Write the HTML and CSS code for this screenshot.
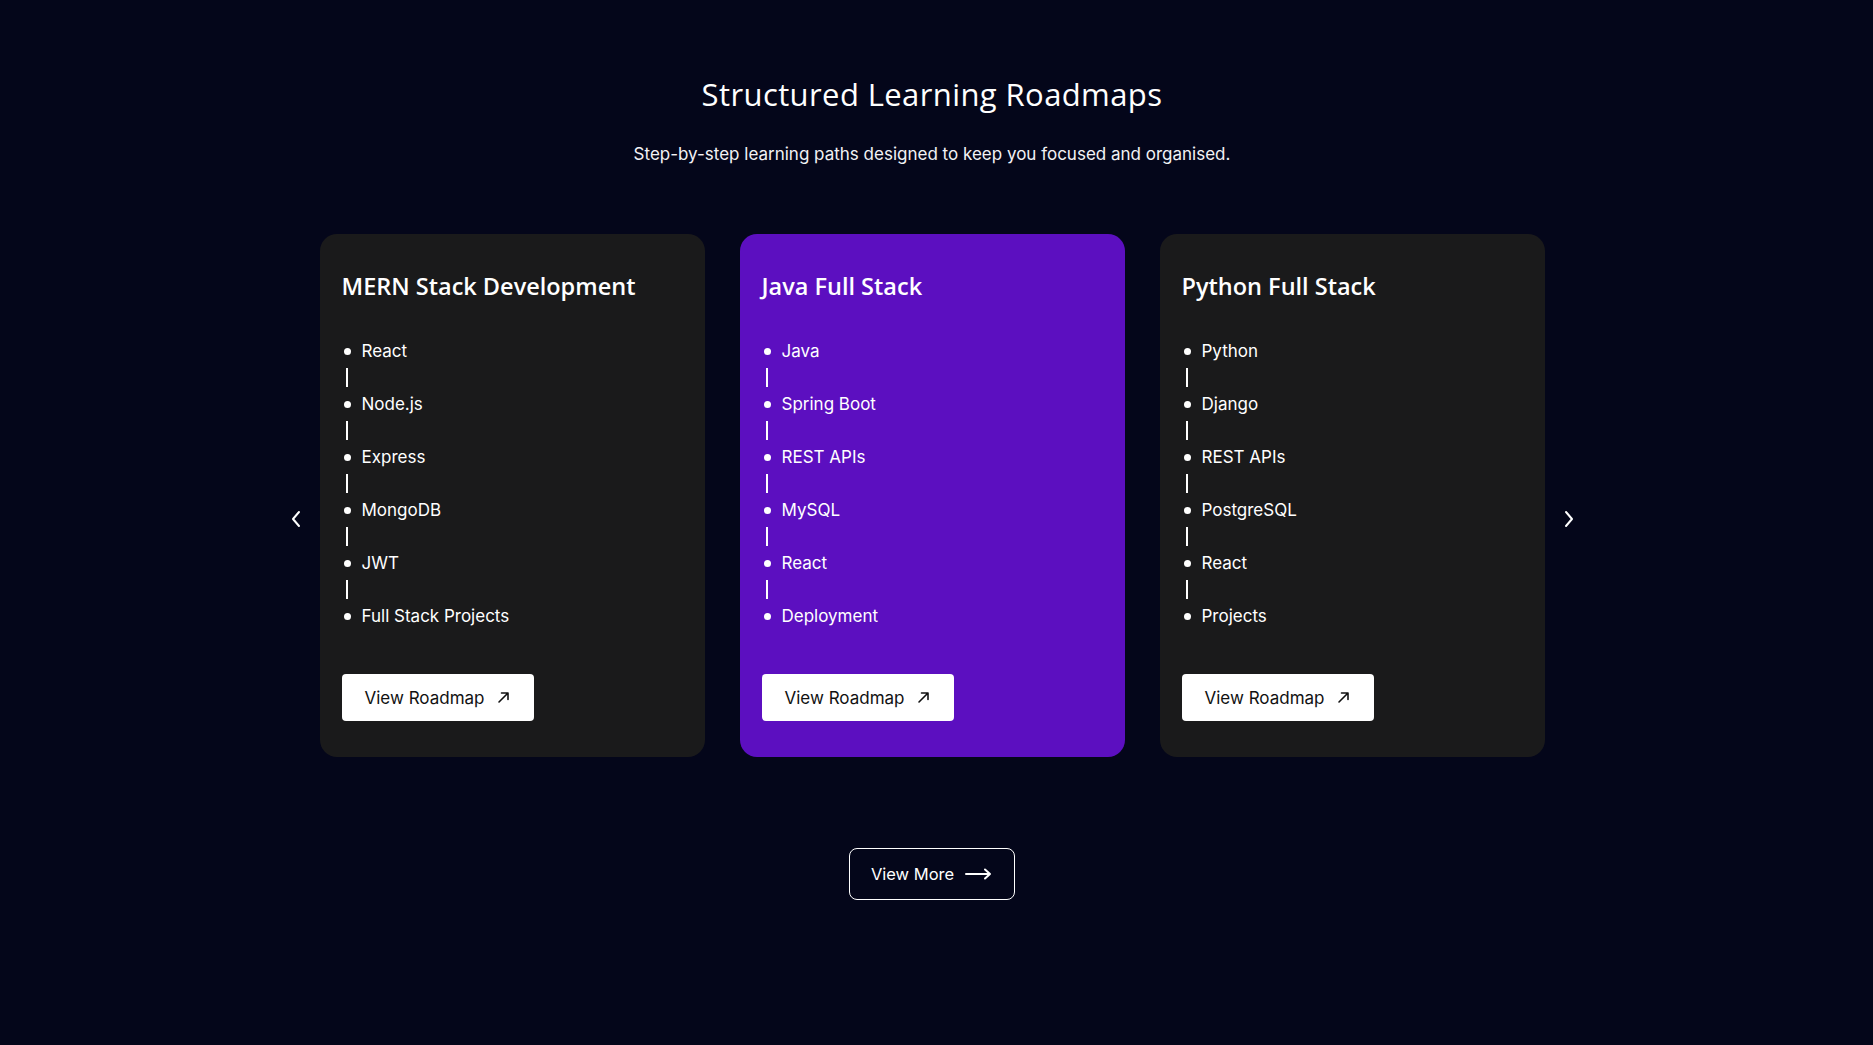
FILE: index.html
```html
<!DOCTYPE html>
<html lang="en">
<head>
    <meta charset="UTF-8">
    <meta name="viewport" content="width=device-width, initial-scale=1.0">
    <title>Structured Learning Roadmaps</title>
    <link rel="stylesheet" href="styles.css">
</head>
<body>
    <section class="roadmaps">
        <h2 class="section-title">Structured Learning Roadmaps</h2>
        <p class="section-sub">Step-by-step learning paths designed to keep you focused and organised.</p>

        <div class="carousel">
            <button class="nav-btn" aria-label="Previous">
                <svg width="12" height="18" viewBox="0 0 12 18" fill="none" stroke="#fff" stroke-width="2" stroke-linecap="round" stroke-linejoin="round"><path d="M9 2 L3 9 L9 16"/></svg>
            </button>

            <div class="cards">
                <div class="card">
                    <h3 class="card-title">MERN Stack Development</h3>
                    <ul class="steps">
                        <li>React</li>
                        <li class="sep"></li>
                        <li>Node.js</li>
                        <li class="sep"></li>
                        <li>Express</li>
                        <li class="sep"></li>
                        <li>MongoDB</li>
                        <li class="sep"></li>
                        <li>JWT</li>
                        <li class="sep"></li>
                        <li>Full Stack Projects</li>
                    </ul>
                    <a href="#" class="btn-roadmap">View Roadmap
                        <svg width="13" height="13" viewBox="0 0 13 13" fill="none" stroke="#111" stroke-width="1.6" stroke-linecap="round" stroke-linejoin="round"><path d="M2 11 L11 2 M4.5 2 H11 V8.5"/></svg>
                    </a>
                </div>

                <div class="card featured">
                    <h3 class="card-title">Java Full Stack</h3>
                    <ul class="steps">
                        <li>Java</li>
                        <li class="sep"></li>
                        <li>Spring Boot</li>
                        <li class="sep"></li>
                        <li>REST APIs</li>
                        <li class="sep"></li>
                        <li>MySQL</li>
                        <li class="sep"></li>
                        <li>React</li>
                        <li class="sep"></li>
                        <li>Deployment</li>
                    </ul>
                    <a href="#" class="btn-roadmap">View Roadmap
                        <svg width="13" height="13" viewBox="0 0 13 13" fill="none" stroke="#111" stroke-width="1.6" stroke-linecap="round" stroke-linejoin="round"><path d="M2 11 L11 2 M4.5 2 H11 V8.5"/></svg>
                    </a>
                </div>

                <div class="card">
                    <h3 class="card-title">Python Full Stack</h3>
                    <ul class="steps">
                        <li>Python</li>
                        <li class="sep"></li>
                        <li>Django</li>
                        <li class="sep"></li>
                        <li>REST APIs</li>
                        <li class="sep"></li>
                        <li>PostgreSQL</li>
                        <li class="sep"></li>
                        <li>React</li>
                        <li class="sep"></li>
                        <li>Projects</li>
                    </ul>
                    <a href="#" class="btn-roadmap">View Roadmap
                        <svg width="13" height="13" viewBox="0 0 13 13" fill="none" stroke="#111" stroke-width="1.6" stroke-linecap="round" stroke-linejoin="round"><path d="M2 11 L11 2 M4.5 2 H11 V8.5"/></svg>
                    </a>
                </div>
            </div>

            <button class="nav-btn" aria-label="Next">
                <svg width="12" height="18" viewBox="0 0 12 18" fill="none" stroke="#fff" stroke-width="2" stroke-linecap="round" stroke-linejoin="round"><path d="M3 2 L9 9 L3 16"/></svg>
            </button>
        </div>

        <div class="more">
            <a href="#" class="btn-more">View More
                <svg width="27" height="12" viewBox="0 0 27 12" fill="none" stroke="#fff" stroke-width="2" stroke-linecap="round" stroke-linejoin="round"><path d="M1 6 H25 M20 1.5 L25 6 L20 10.5"/></svg>
            </a>
        </div>
    </section>
</body>
</html>
```

FILE: styles.css
```css
* {
    margin: 0;
    padding: 0;
    box-sizing: border-box;
}

body {
    background-color: #04061a;
    color: #fff;
    font-family: Inter, 'Noto Sans', sans-serif;
    min-height: 100vh;
}

.roadmaps {
    padding: 72px 9px 0 0;
    text-align: center;
}

.section-title {
    font-family: 'Open Sans', sans-serif;
    font-weight: 400;
    font-size: 31px;
    line-height: 44px;
    letter-spacing: 0.4px;
}

.section-sub {
    margin-top: 26px;
    font-size: 17px;
    line-height: 24px;
    color: #f2f2f5;
}

.carousel {
    margin-top: 68px;
    display: flex;
    justify-content: center;
    align-items: center;
    gap: 12px;
}

.nav-btn {
    background: none;
    border: none;
    width: 24px;
    height: 24px;
    display: flex;
    align-items: center;
    justify-content: center;
    margin-top: 46px;
    cursor: pointer;
}

.cards {
    display: flex;
    gap: 35px;
}

.card {
    width: 385px;
    height: 523px;
    background-color: #1a1a1b;
    border-radius: 17px;
    padding: 37px 22px 36px;
    text-align: left;
    display: flex;
    flex-direction: column;
}

.card.featured {
    background-color: #5c0fc0;
}

.card-title {
    font-family: 'Open Sans', sans-serif;
    font-weight: 600;
    font-size: 23.5px;
    line-height: 30px;
}

.steps {
    list-style: none;
    margin-top: 37px;
    font-size: 17px;
}

.steps li {
    position: relative;
    padding-left: 20px;
    line-height: 26px;
}

.steps li::before {
    content: "";
    position: absolute;
    left: 2px;
    top: 50%;
    width: 7px;
    height: 7px;
    margin-top: -3px;
    border-radius: 50%;
    background: #fff;
}

.steps li.sep {
    height: 27px;
    padding: 0;
}

.steps li.sep::before {
    left: 4px;
    top: 4px;
    width: 2px;
    height: 19px;
    margin: 0;
    border-radius: 0;
}

.btn-roadmap {
    margin-top: auto;
    align-self: flex-start;
    display: inline-flex;
    align-items: center;
    gap: 12px;
    height: 47px;
    padding: 0 24px 0 23px;
    background: #fff;
    color: #111;
    border-radius: 4px;
    font-size: 17px;
    text-decoration: none;
}

.more {
    margin-top: 91px;
    display: flex;
    justify-content: center;
}

.btn-more {
    display: inline-flex;
    align-items: center;
    gap: 11px;
    height: 52px;
    padding: 0 22px 0 21px;
    border: 1.5px solid #fff;
    border-radius: 8px;
    color: #fff;
    font-size: 16.5px;
    text-decoration: none;
}
```
